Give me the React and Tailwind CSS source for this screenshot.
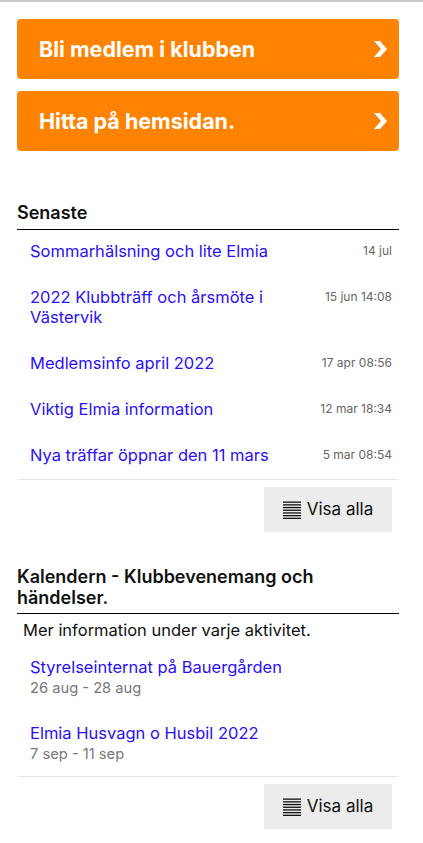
import React from 'react';

const font = { fontFamily: 'Inter, "Noto Sans", sans-serif' };

const Chevron = () => (
    <svg width="14" height="16" viewBox="0 0 14 16" className="shrink-0">
        <polygon points="0,0 6,0 13,8 6,16 0,16 7,8" fill="white" />
    </svg>
);

const ListIcon = () => (
    <svg width="18" height="18" viewBox="0 0 18 18" className="shrink-0">
        {[0.5, 3.2, 5.9, 8.6, 11.3, 14, 16.7].map((y) => (
            <rect key={y} x="0" y={y} width="18" height="1.3" fill="#111" />
        ))}
    </svg>
);

const news = [
    { title: 'Sommarhälsning och lite Elmia', date: '14 jul' },
    { title: '2022 Klubbträff och årsmöte i Västervik', date: '15 jun 14:08' },
    { title: 'Medlemsinfo april 2022', date: '17 apr 08:56' },
    { title: 'Viktig Elmia information', date: '12 mar 18:34' },
    { title: 'Nya träffar öppnar den 11 mars', date: '5 mar 08:54' },
];

const events = [
    { title: 'Styrelseinternat på Bauergården', date: '26 aug - 28 aug' },
    { title: 'Elmia Husvagn o Husbil 2022', date: '7 sep - 11 sep' },
];

const OrangeButton = ({ label }) => (
    <a className="flex items-center justify-between h-[60px] rounded-[4px] bg-[#ff8300] pl-[22px] pr-[11px] text-white font-bold text-[21.5px] cursor-pointer">
        <span>{label}</span>
        <Chevron />
    </a>
);

const VisaAlla = () => (
    <div className="flex justify-end pr-[7px] pt-[7px]">
        <button className="flex items-center gap-[6px] h-[45px] w-[128px] justify-center bg-[#ececec] text-[17px] text-[#111]">
            <ListIcon />
            Visa alla
        </button>
    </div>
);

export default function App() {
    return (
        <div className="w-[423px] min-h-[843px] bg-white border-t-2 border-[#c8c8c8]" style={font}>
            <div className="w-[382px] ml-[17px]">
                <div className="flex flex-col gap-[12px] pt-[17px]">
                    <OrangeButton label="Bli medlem i klubben" />
                    <OrangeButton label="Hitta på hemsidan." />
                </div>

                {/* Senaste */}
                <div className="mt-[51px]">
                    <h2 className="text-[18px] font-semibold text-[#111] leading-[22px] pb-[5px] border-b border-black">
                        Senaste
                    </h2>
                    <ul className="border-b border-[#e8e8e8]">
                        {news.map((n) => (
                            <li key={n.title} className="flex justify-between items-start pl-[13px] pr-[7px] pt-[11px] pb-[15px] last:pb-[14px]">
                                <a className="text-[16.5px] leading-[20px] text-[#2b10f5] max-w-[270px]">{n.title}</a>
                                <span className="text-[12px] leading-[20px] text-[#666] whitespace-nowrap">{n.date}</span>
                            </li>
                        ))}
                    </ul>
                    <VisaAlla />
                </div>

                {/* Kalendern */}
                <div className="mt-[34px]">
                    <h2 className="text-[18px] font-semibold text-[#111] leading-[21px] pb-[5px] border-b border-black">
                        Kalendern - Klubbevenemang och händelser.
                    </h2>
                    <p className="text-[16.5px] text-[#111] leading-[20px] pl-[6px] pt-[6px]">
                        Mer information under varje aktivitet.
                    </p>
                    <ul className="border-b border-[#e8e8e8] pt-[11px] pb-[6px]">
                        {events.map((e) => (
                            <li key={e.title} className="pl-[13px] py-[6px] mb-[13px] last:mb-0">
                                <a className="block text-[16.5px] leading-[21px] text-[#2b10f5]">{e.title}</a>
                                <span className="block text-[14.7px] leading-[20px] text-[#777]">{e.date}</span>
                            </li>
                        ))}
                    </ul>
                    <VisaAlla />
                </div>
            </div>
        </div>
    );
}
